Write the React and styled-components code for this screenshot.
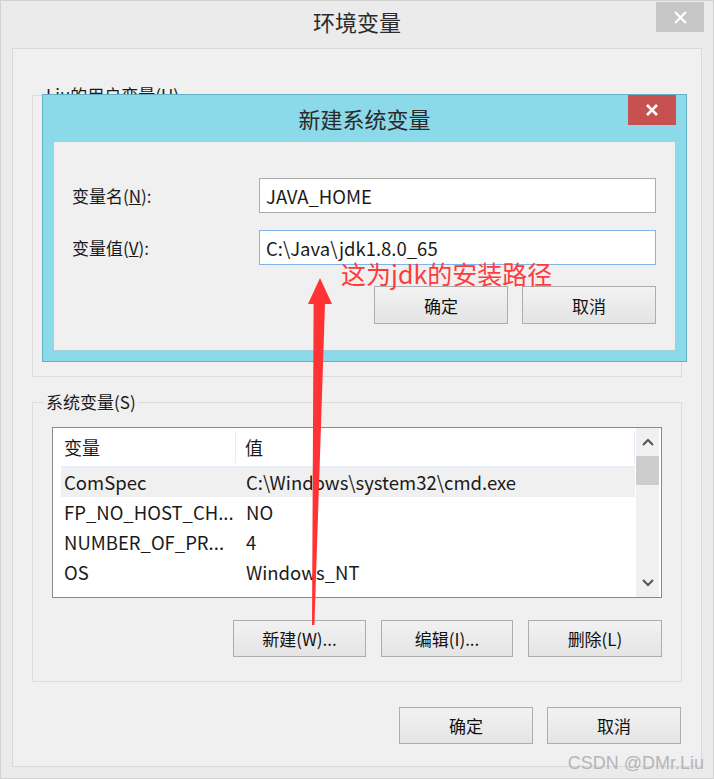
import styled, { createGlobalStyle } from "styled-components";

const GlobalStyle = createGlobalStyle`
  html, body {
    margin: 0;
    padding: 0;
    background: #ffffff;
  }
  * { box-sizing: border-box; }
`;

const font = `"Noto Sans CJK SC", "Noto Sans", sans-serif`;

const Window = styled.div`
  position: relative;
  width: 714px;
  height: 779px;
  background: #ebebeb;
  border: 1px solid #d2d2d2;
  display: flex;
  flex-direction: column;
  font-family: ${font};
  color: #1a1a1a;
  overflow: hidden;
`;

const TitleBar = styled.div`
  position: relative;
  height: 47px;
  display: flex;
  justify-content: center;
  padding-top: 5px;
`;

const Title = styled.div`
  font-size: 22px;
  line-height: 30px;
  color: #2b2b2b;
`;

const CloseBtn = styled.div`
  position: absolute;
  top: ${(p) => p.$top}px;
  right: ${(p) => p.$right}px;
  width: 48px;
  height: 30px;
  background: ${(p) => p.$bg};
  display: flex;
  align-items: center;
  justify-content: center;
`;

const Client = styled.div`
  flex: 1;
  margin: 0 11px 11px 11px;
  background: #f0f0f0;
  border: 1px solid #d9d9d9;
  padding: 46px 19px 0 19px;
  display: flex;
  flex-direction: column;
`;

const GroupBox = styled.div`
  position: relative;
  height: ${(p) => p.$h}px;
  border: 1px solid #dcdcdc;
  margin-bottom: ${(p) => p.$mb || 0}px;
  padding: 24px 19px 0 19px;
  display: flex;
  flex-direction: column;
`;

const Legend = styled.div`
  position: absolute;
  top: -14px;
  left: 11px;
  padding: 0 2px;
  background: #f0f0f0;
  font-size: 17px;
  line-height: 26px;
  color: #1a1a1a;
`;

const ListView = styled.div`
  height: 171px;
  border: 1px solid #86898f;
  background: #ffffff;
  display: flex;
  overflow: hidden;
`;

const ListMain = styled.div`
  flex: 1;
  padding-left: 8px;
  overflow: hidden;
`;

const HeaderRow = styled.div`
  height: 39px;
  display: flex;
  border-bottom: 1px solid #e4edf8;
  font-size: 18px;
  align-items: stretch;
`;

const HeaderCell = styled.div`
  width: ${(p) => (p.$w ? `${p.$w}px` : "auto")};
  flex: ${(p) => (p.$w ? "none" : 1)};
  padding-left: ${(p) => p.$pl}px;
  display: flex;
  align-items: center;
  border-right: 1px solid #e4edf8;
  margin: 3px 0;
`;

const Row = styled.div`
  height: 30px;
  display: grid;
  grid-template-columns: 182px 1fr;
  align-items: center;
  font-size: 18.5px;
  background: ${(p) => (p.$sel ? "#f0f0f0" : "transparent")};
  white-space: nowrap;
`;

const Cell = styled.div`
  padding-left: 3px;
  overflow: hidden;
`;

const ScrollBar = styled.div`
  width: 23px;
  margin: 0 2px 0 1px;
  background: #f0f0f0;
  display: flex;
  flex-direction: column;
  align-items: center;
`;

const ScrollArrow = styled.div`
  height: 28px;
  width: 100%;
  display: flex;
  align-items: center;
  justify-content: center;
`;

const Thumb = styled.div`
  width: 100%;
  height: 29px;
  background: #cdcdcd;
`;

const Spacer = styled.div`
  flex: 1;
`;

const ButtonRow = styled.div`
  display: flex;
  justify-content: flex-end;
  gap: ${(p) => p.$gap}px;
  margin-top: ${(p) => p.$mt}px;
  padding-right: ${(p) => p.$pr || 0}px;
`;

const Button = styled.div`
  width: ${(p) => p.$w}px;
  height: ${(p) => p.$h}px;
  border: 1px solid #adadad;
  background: linear-gradient(#f2f2f2, #e4e4e4);
  display: flex;
  align-items: center;
  justify-content: center;
  font-size: 17px;
  color: #111;
`;

const Dialog = styled.div`
  position: absolute;
  left: 41px;
  top: 93px;
  width: 645px;
  height: 268px;
  background: #8bd9e9;
  border: 1px solid #62b1c3;
  padding: 0 10px 10px 10px;
  display: flex;
  flex-direction: column;
`;

const DialogTitleBar = styled.div`
  position: relative;
  height: 46px;
  display: flex;
  justify-content: center;
  padding-top: 8px;
`;

const Panel = styled.div`
  position: relative;
  flex: 1;
  background: #f0f0f0;
  border: 1px solid #a3cfda;
  padding: 36px 19px 0 18px;
  display: grid;
  grid-template-columns: 187px 1fr;
  grid-template-rows: 35px 35px 38px;
  row-gap: 17px;
  align-items: center;
`;

const FieldLabel = styled.div`
  font-size: 17px;
`;

const Input = styled.div`
  height: 35px;
  border: 1px solid ${(p) => (p.$focus ? "#7eb4ea" : "#acacac")};
  background: #ffffff;
  display: flex;
  align-items: center;
  padding-left: 6px;
  font-size: 18.5px;
  line-height: 22px;
`;

const DialogButtons = styled.div`
  grid-column: 1 / span 2;
  display: flex;
  justify-content: flex-end;
  gap: 14px;
  margin-top: 8px;
`;

const Note = styled.div`
  position: absolute;
  left: 287px;
  top: 119px;
  font-size: 25px;
  line-height: 25px;
  color: #ff3b3b;
  white-space: nowrap;
`;

const Watermark = styled.div`
  position: absolute;
  right: 9px;
  bottom: 4px;
  font-family: "Liberation Sans", sans-serif;
  font-size: 18px;
  color: #b5b5b5;
`;

const Overlay = styled.svg`
  position: absolute;
  left: 0;
  top: 0;
  pointer-events: none;
`;

const Cross = ({ size = 12, w = 2.2 }) => (
  <svg width={size} height={size} viewBox="0 0 12 12">
    <path d="M1 1 L11 11 M11 1 L1 11" stroke="#ffffff" strokeWidth={w} fill="none" />
  </svg>
);

const Chevron = ({ up }) => (
  <svg width="12" height="8" viewBox="0 0 12 8">
    <path
      d={up ? "M1 7 L6 2 L11 7" : "M1 1 L6 6 L11 1"}
      stroke="#555"
      strokeWidth="2"
      fill="none"
    />
  </svg>
);

const u = (s) => <span style={{ textDecoration: "underline" }}>{s}</span>;

const rows = [
  ["ComSpec", "C:\\Windows\\system32\\cmd.exe", true],
  ["FP_NO_HOST_CH...", "NO"],
  ["NUMBER_OF_PR...", "4"],
  ["OS", "Windows_NT"],
];

export default function App() {
  return (
    <>
      <GlobalStyle />
      <Window>
        <TitleBar>
          <Title>环境变量</Title>
          <CloseBtn $top={1} $right={9} $bg="#c6c6c6">
            <Cross size={13} w={2} />
          </CloseBtn>
        </TitleBar>
        <Client>
          <GroupBox $h={282} $mb={25}>
            <Legend>Liu的用户变量(U)</Legend>
          </GroupBox>
          <GroupBox $h={280}>
            <Legend>系统变量(S)</Legend>
            <ListView>
              <ListMain>
                <HeaderRow>
                  <HeaderCell $w={175} $pl={3}>变量</HeaderCell>
                  <HeaderCell $pl={9}>值</HeaderCell>
                </HeaderRow>
                {rows.map(([k, v, sel]) => (
                  <Row key={k} $sel={sel}>
                    <Cell>{k}</Cell>
                    <Cell>{v}</Cell>
                  </Row>
                ))}
              </ListMain>
              <ScrollBar>
                <ScrollArrow>
                  <Chevron up />
                </ScrollArrow>
                <Thumb />
                <Spacer />
                <ScrollArrow>
                  <Chevron />
                </ScrollArrow>
              </ScrollBar>
            </ListView>
            <ButtonRow $gap={15} $mt={22}>
              <Button $w={133} $h={37}>新建(W)...</Button>
              <Button $w={132} $h={37}>编辑(I)...</Button>
              <Button $w={134} $h={37}>删除(L)</Button>
            </ButtonRow>
          </GroupBox>
          <ButtonRow $gap={14} $mt={25} $pr={1}>
            <Button $w={134} $h={37}>确定</Button>
            <Button $w={134} $h={37}>取消</Button>
          </ButtonRow>
        </Client>

        <Dialog>
          <DialogTitleBar>
            <Title>新建系统变量</Title>
            <CloseBtn $top={0} $right={0} $bg="#c75050">
              <Cross size={12} w={2.6} />
            </CloseBtn>
          </DialogTitleBar>
          <Panel>
            <FieldLabel>变量名({u("N")}):</FieldLabel>
            <Input>JAVA_HOME</Input>
            <FieldLabel>变量值({u("V")}):</FieldLabel>
            <Input $focus>C:\Java\jdk1.8.0_65</Input>
            <DialogButtons>
              <Button $w={134} $h={38}>确定</Button>
              <Button $w={134} $h={38}>取消</Button>
            </DialogButtons>
            <Note>这为jdk的安装路径</Note>
          </Panel>
        </Dialog>

        <Overlay width="714" height="779" viewBox="0 0 714 779">
          <polygon
            points="319,277 331,303 324,303 313.4,624 311,624 312.6,303 307,303"
            fill="#ff3333"
          />
        </Overlay>

        <Watermark>CSDN @DMr.Liu</Watermark>
      </Window>
    </>
  );
}
